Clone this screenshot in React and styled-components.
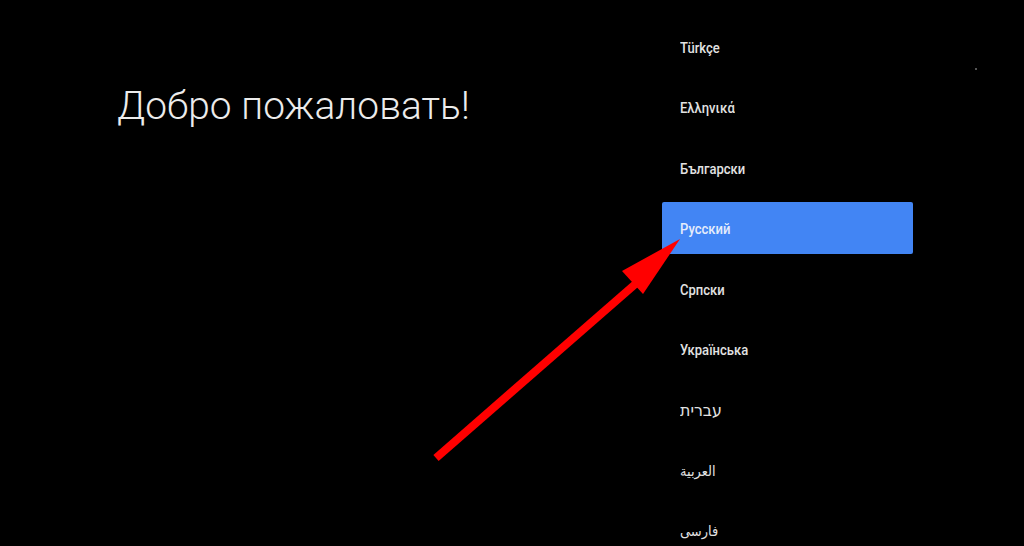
import React from 'react'
import styled, { createGlobalStyle } from 'styled-components'

const GlobalStyle = createGlobalStyle`
  html, body {
    margin: 0;
    padding: 0;
    background: #000;
  }
  body {
    font-family: Roboto, "Noto Sans", "DejaVu Sans", sans-serif;
  }
`

const Screen = styled.div`
  position: relative;
  width: 1024px;
  height: 546px;
  overflow: hidden;
  background: #000;
  display: flex;
  align-items: flex-start;
`

const Intro = styled.div`
  width: 662px;
  flex-shrink: 0;
  padding: 82px 0 0 117px;
  box-sizing: border-box;
`

const Title = styled.h1`
  margin: 0;
  font-family: Roboto, sans-serif;
  font-weight: 300;
  font-size: 38.8px;
  line-height: 48px;
  color: #ececec;
  letter-spacing: 0.1px;
`

const LanguageList = styled.ul`
  list-style: none;
  margin: 0;
  padding: 21px 0 0 0;
  width: 251px;
  flex-shrink: 0;
  display: flex;
  flex-direction: column;
  gap: 8.4px;
`

const LanguageItem = styled.li`
  height: 52px;
  flex-shrink: 0;
  display: flex;
  align-items: center;
  justify-content: flex-start;
  padding: 2px 0 0 18px;
  box-sizing: border-box;
  border-radius: 2px;
  background: ${({ $active }) => ($active ? '#4285f4' : 'transparent')};
  color: ${({ $active }) => ($active ? '#e6edfb' : '#e2e2e2')};
  font-family: Roboto, "DejaVu Sans", sans-serif;
  font-weight: ${({ $weight }) => $weight || 500};
  font-size: ${({ $size }) => $size || 14}px;
  unicode-bidi: plaintext;
  text-align: left;
`

const Label = styled.span`
  display: inline-block;
  transform: scaleX(0.93);
  transform-origin: left center;
`

const Dot = styled.div`
  position: absolute;
  left: 975px;
  top: 68px;
  width: 2px;
  height: 2px;
  background: #555;
`

const ArrowLayer = styled.svg`
  position: absolute;
  left: 0;
  top: 0;
  pointer-events: none;
`

const languages = [
  { name: 'Türkçe' },
  { name: 'Ελληνικά' },
  { name: 'Български' },
  { name: 'Русский', active: true },
  { name: 'Српски' },
  { name: 'Українська' },
  { name: 'עברית', size: 17, weight: 400 },
  { name: 'العربية', size: 14 },
  { name: 'فارسی', size: 14 },
]

const App = () => {
  return (
    <Screen>
      <GlobalStyle />
      <Intro>
        <Title>Добро пожаловать!</Title>
      </Intro>
      <LanguageList>
        {languages.map((lang, index) => (
          <LanguageItem key={index} $active={lang.active} $size={lang.size} $weight={lang.weight}>
            <Label>{lang.name}</Label>
          </LanguageItem>
        ))}
      </LanguageList>
      <Dot />
      <ArrowLayer width="1024" height="546" viewBox="0 0 1024 546">
        <line x1="436" y1="458" x2="640" y2="280" stroke="#ff0000" strokeWidth="8" />
        <polygon points="680,239 622,271 643,294" fill="#ff0000" />
      </ArrowLayer>
    </Screen>
  )
}

export default App
